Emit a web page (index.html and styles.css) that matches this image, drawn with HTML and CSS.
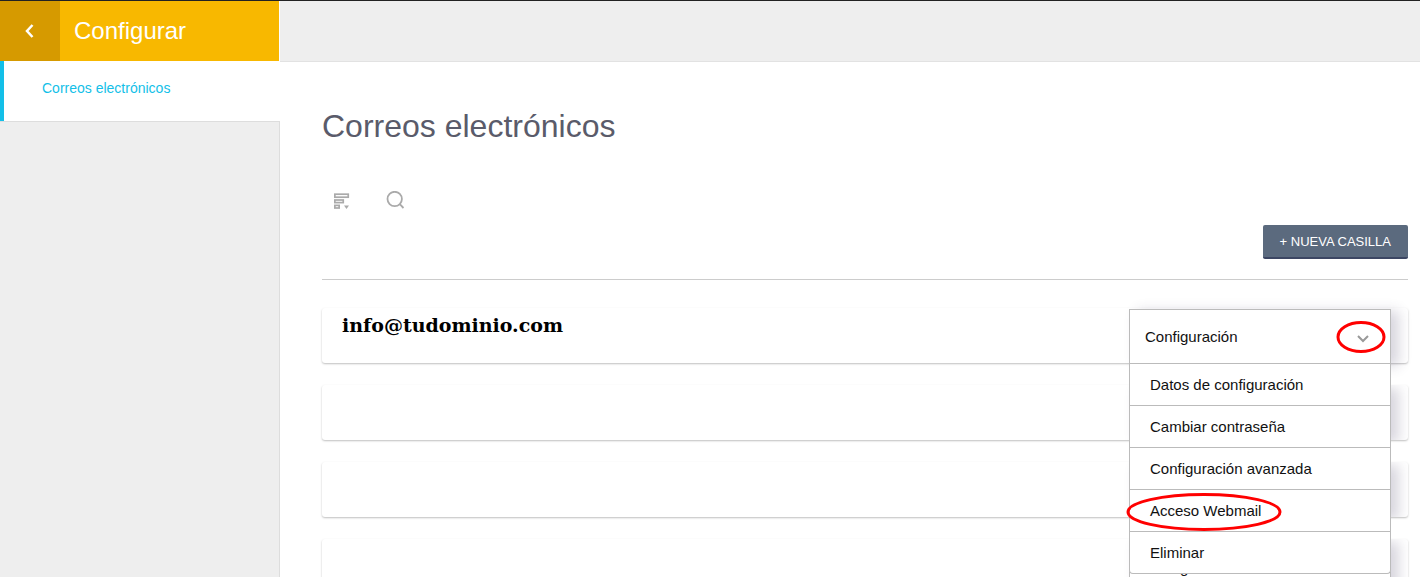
FILE: index.html
```html
<!DOCTYPE html>
<html lang="es">
<head>
    <meta charset="UTF-8">
    <meta name="viewport" content="width=device-width, initial-scale=1.0">
    <title>Configurar - Correos electrónicos</title>
    <link rel="stylesheet" href="styles.css">
</head>
<body>
    <div class="layout">
        <aside class="sidebar">
            <header class="sidebar-header">
                <button class="back-btn" type="button" aria-label="Volver">
                    <svg width="12" height="16" viewBox="0 0 12 16"><path d="M8.500 2 L3 8 L8.500 14" fill="none" stroke="#fff" stroke-width="2.500"/></svg>
                </button>
                <span class="sidebar-title">Configurar</span>
            </header>
            <nav class="sidebar-nav">
                <a href="#" class="active">Correos electrónicos</a>
            </nav>
            <div class="sidebar-fill"></div>
        </aside>

        <div class="content">
            <div class="topbar"></div>
            <main>
                <h1>Correos electrónicos</h1>

                <div class="tools">
                    <button class="icon-btn" type="button" aria-label="Ordenar">
                        <svg width="16" height="16" viewBox="0 0 16 16">
                            <g fill="none" stroke="#aaa" stroke-width="1.700">
                                <rect x="0.850" y="1.200" width="13.400" height="3"/>
                                <rect x="0.850" y="7" width="8.400" height="2.600"/>
                                <rect x="0.850" y="12.400" width="4.300" height="2.600"/>
                            </g>
                            <path d="M10 12.500 h5 l-2.500 3.500 z" fill="#aaa"/>
                        </svg>
                    </button>
                    <button class="icon-btn" type="button" aria-label="Buscar">
                        <svg width="20" height="20" viewBox="0 0 20 20">
                            <g fill="none" stroke="#aaa" stroke-width="1.800">
                                <circle cx="8.700" cy="8" r="7.200"/>
                                <path d="M13.800 13.200 L17.500 17"/>
                            </g>
                        </svg>
                    </button>
                </div>

                <div class="actions">
                    <button class="new-btn" type="button">+ NUEVA CASILLA</button>
                </div>

                <ul class="mailboxes">
                    <li class="mailbox">
                        <span class="address">info@tudominio.com</span>
                        <div class="config open">
                            <button class="config-btn" type="button" aria-expanded="true">
                                Configuración
                                <span class="arrow">
                                    <svg width="14" height="10" viewBox="0 0 14 10"><path d="M2 2 L7 7 L12 2" fill="none" stroke="#999" stroke-width="2"/></svg>
                                    <svg class="mark mark-arrow" width="50" height="34" viewBox="0 0 50 34"><ellipse cx="25" cy="17" rx="23" ry="14.500"/></svg>
                                </span>
                            </button>
                            <ul class="config-menu">
                                <li><a href="#">Datos de configuración</a></li>
                                <li><a href="#">Cambiar contraseña</a></li>
                                <li><a href="#">Configuración avanzada</a></li>
                                <li>
                                    <a href="#">Acceso Webmail</a>
                                    <svg class="mark mark-item" width="156" height="40" viewBox="0 0 156 40"><ellipse cx="78" cy="20" rx="76" ry="17.500"/></svg>
                                </li>
                                <li><a href="#">Eliminar</a></li>
                            </ul>
                        </div>
                    </li>
                    <li class="mailbox closed">
                        <div class="config"><button class="config-btn" type="button" aria-label="Configuración"></button></div>
                    </li>
                    <li class="mailbox closed">
                        <div class="config"><button class="config-btn" type="button" aria-label="Configuración"></button></div>
                    </li>
                    <li class="mailbox closed">
                        <div class="config"><button class="config-btn" type="button">Configuración</button></div>
                    </li>
                </ul>
            </main>
        </div>
    </div>
</body>
</html>
```

FILE: styles.css
```css
* {
    margin: 0;
    padding: 0;
    box-sizing: border-box;
}

body {
    font-family: "Liberation Sans", Arial, sans-serif;
    background: #fff;
    color: #111;
}

button {
    font-family: inherit;
    border: none;
    background: none;
    cursor: pointer;
}

a {
    text-decoration: none;
}

ul {
    list-style: none;
}

svg {
    display: block;
}

.layout {
    display: flex;
    height: 100vh;
    overflow: hidden;
    border-top: 1px solid #222;
}

/* Sidebar */
.sidebar {
    display: flex;
    flex-direction: column;
    flex: none;
    width: 280px;
}

.sidebar-header {
    display: flex;
    align-items: center;
    height: 60px;
    margin-right: 1px;
    background: #f8b800;
}

.back-btn {
    display: flex;
    align-items: center;
    justify-content: center;
    width: 60px;
    height: 60px;
    background: #d69a00;
}

.sidebar-title {
    padding-left: 14px;
    font-size: 24px;
    color: #fff;
}

.sidebar-nav a {
    display: block;
    height: 60px;
    padding-left: 38px;
    border-left: 4px solid #13bfe8;
    font-size: 14px;
    line-height: 54px;
    color: #13bfe8;
}

.sidebar-fill {
    flex: 1;
    background: #eee;
    border-top: 1px solid #ddd;
    border-right: 1px solid #ddd;
}

/* Content */
.content {
    flex: 1;
    min-width: 0;
}

.topbar {
    height: 61px;
    background: #eee;
    border-bottom: 1px solid #e2e2e2;
}

main {
    padding: 44px 12px 0 42px;
}

h1 {
    font-size: 32px;
    font-weight: normal;
    line-height: 40px;
    color: #5a5b6a;
}

.tools {
    display: flex;
    gap: 34px;
    height: 34px;
    margin-top: 38px;
    padding-left: 10px;
}

.icon-btn {
    display: flex;
    align-items: center;
    justify-content: center;
    width: 20px;
    height: 34px;
}

.actions {
    display: flex;
    justify-content: flex-end;
    margin-top: 7px;
    padding-bottom: 20px;
    border-bottom: 1px solid #ccc;
}

.new-btn {
    height: 34px;
    padding: 0 17px;
    border-bottom: 2px solid #3c4663;
    border-radius: 2px;
    background: #5b6a7e;
    font-size: 13px;
    color: #fff;
}

/* Mailbox list */
.mailboxes {
    display: grid;
    gap: 22px;
    margin-top: 28px;
}

.mailbox {
    display: flex;
    justify-content: space-between;
    height: 55px;
    padding: 0 17px 0 20px;
    border-radius: 3px;
    box-shadow: 0 1px 2px rgba(0, 0, 0, 0.25);
}

.closed {
    overflow: hidden;
}

.address {
    font-family: "DejaVu Serif", serif;
    font-size: 19px;
    font-weight: bold;
    line-height: 34px;
    color: #000;
}

.config {
    position: relative;
    width: 262px;
    margin-left: auto;
    padding-top: 1px;
}

.config-btn {
    display: flex;
    align-items: center;
    justify-content: space-between;
    width: 100%;
    height: 55px;
    padding: 0 20px 0 15px;
    border: 1px solid #bbb;
    background: #fff;
    box-shadow: 8px 2px 12px rgba(60, 50, 90, 0.2);
    font-size: 15px;
    color: #111;
}

.open {
    z-index: 1;
}

.arrow {
    position: relative;
    padding-top: 4px;
}

.config-menu {
    position: absolute;
    top: 56px;
    left: 0;
    width: 100%;
    border: 1px solid #bbb;
    border-top: none;
    border-radius: 0 0 4px 4px;
    background: #fff;
}

.config-menu li {
    position: relative;
    height: 42px;
    border-bottom: 1px solid #bbb;
}

.config-menu li:last-child {
    height: 41px;
    border-bottom: none;
}

.config-menu a {
    display: block;
    padding-left: 20px;
    font-size: 15px;
    line-height: 42px;
    color: #111;
}

/* Red highlights drawn over the menu */
.mark {
    position: absolute;
    fill: none;
    stroke: #f00;
    stroke-width: 3;
    pointer-events: none;
}

.mark-arrow {
    top: -10px;
    left: -20px;
}

.mark-item {
    top: 2px;
    left: -4px;
}
```
